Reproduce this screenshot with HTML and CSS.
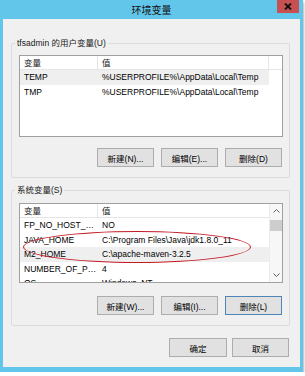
FILE: index.html
```html
<!DOCTYPE html>
<html>
  <head>
    <title>环境变量</title>
    <link rel="stylesheet" href="styles.css">
  </head>
  <body>
    <div class="window">
      <!-- Title bar -->
      <div class="titlebar">
        <span></span>
        <span class="title">环境变量</span>
        <span class="close">
          <svg width="8" height="7" viewBox="0 0 8 7">
            <path d="M1 0.5 L7 6.5 M7 0.5 L1 6.5" stroke="#111" stroke-width="1.8" fill="none" />
          </svg>
        </span>
      </div>

      <div class="client">
        <!-- User variables -->
        <fieldset class="group group-user">
          <legend>tfsadmin 的用户变量(U)</legend>
          <div class="list list-user">
            <div class="list-main">
              <div class="list-head">
                <span class="col-name">变量</span>
                <span class="col-value">值</span>
                <span class="col-fill"></span>
              </div>
              <div class="row selected">
                <span class="col-name">TEMP</span>
                <span class="col-value">%USERPROFILE%\AppData\Local\Temp</span>
              </div>
              <div class="row">
                <span class="col-name">TMP</span>
                <span class="col-value">%USERPROFILE%\AppData\Local\Temp</span>
              </div>
            </div>
          </div>
          <div class="buttons">
            <button class="btn">新建(N)...</button>
            <button class="btn">编辑(E)...</button>
            <button class="btn">删除(D)</button>
          </div>
        </fieldset>

        <!-- System variables -->
        <fieldset class="group group-system">
          <legend>系统变量(S)</legend>
          <div class="list list-system">
            <div class="list-main">
              <div class="list-head">
                <span class="col-name">变量</span>
                <span class="col-value">值</span>
              </div>
              <div class="row">
                <span class="col-name">FP_NO_HOST_CHECK</span>
                <span class="col-value">NO</span>
              </div>
              <div class="row">
                <span class="col-name">JAVA_HOME</span>
                <span class="col-value">C:\Program Files\Java\jdk1.8.0_11</span>
              </div>
              <div class="row selected">
                <span class="col-name">M2_HOME</span>
                <span class="col-value">C:\apache-maven-3.2.5</span>
              </div>
              <div class="row">
                <span class="col-name">NUMBER_OF_PROCESSORS</span>
                <span class="col-value">4</span>
              </div>
              <div class="row">
                <span class="col-name">OS</span>
                <span class="col-value">Windows_NT</span>
              </div>
            </div>
            <div class="scrollbar">
              <span class="arrow">
                <svg width="7" height="4" viewBox="0 0 7 4">
                  <polyline points="0.5,3.5 3.5,0.5 6.5,3.5" stroke="#606060" fill="none" />
                </svg>
              </span>
              <span class="thumb"></span>
              <span class="track"></span>
              <span class="arrow">
                <svg width="7" height="4" viewBox="0 0 7 4">
                  <polyline points="0.5,0.5 3.5,3.5 6.5,0.5" stroke="#606060" fill="none" />
                </svg>
              </span>
            </div>
            <!-- red mark around JAVA_HOME / M2_HOME -->
            <span class="mark"></span>
          </div>
          <div class="buttons buttons-system">
            <button class="btn">新建(W)...</button>
            <button class="btn">编辑(I)...</button>
            <button class="btn btn-focus">删除(L)</button>
          </div>
        </fieldset>

        <!-- Dialog buttons -->
        <div class="dialog-buttons">
          <button class="btn btn-ok">确定</button>
          <button class="btn">取消</button>
        </div>
      </div>
    </div>
  </body>
</html>
```

FILE: styles.css
```css
body {
  margin: 0;
  background: #ffffff;
  font-family: "Liberation Sans", "Noto Sans CJK SC", sans-serif;
  font-size: 8.5px;
  color: #000;
}
.window {
  width: 303px;
  height: 372px;
  box-sizing: border-box;
  padding: 0 3px 5px;
  background: #62c6eb;
  display: flex;
  flex-direction: column;
  box-shadow: 0 2px 3px rgba(0, 0, 0, 0.55);
}
.titlebar {
  height: 19px;
  display: grid;
  grid-template-columns: 1fr auto 1fr;
  align-items: start;
}
.title {
  font-family: "Noto Sans CJK SC", sans-serif;
  font-size: 10px;
  line-height: 20px;
  color: #111;
}
.close {
  justify-self: end;
  width: 22px;
  height: 13px;
  margin-right: 1px;
  background: #c75050;
  display: flex;
  align-items: center;
  justify-content: center;
}
.client {
  flex: 1;
  background: #f0f0f0;
  padding: 0 10px 10px 8px;
  display: flex;
  flex-direction: column;
}
.group {
  margin: 0;
  border: 1px solid #dcdcdc;
  border-radius: 2px;
  min-width: 0;
}
.group legend {
  margin-left: -4px;
  padding: 0 2px;
  line-height: 12px;
  font-size: 8.5px;
  color: #1a1a1a;
}
.group-user {
  margin-top: 18px;
  padding: 6px 6px 10px 7px;
}
.group-system {
  margin-top: 6px;
  padding: 7px 6px 10px 7px;
}
.list {
  position: relative;
  background: #fff;
  border: 1px solid #a0a0a0;
  display: flex;
  overflow: hidden;
}
.list-user {
  height: 80px;
}
.list-system {
  height: 78px;
}
.list-main {
  flex: 1;
  overflow: hidden;
}
.list-head {
  display: flex;
  height: 13px;
  line-height: 13px;
  border-bottom: 1px solid #e5e5e5;
  color: #1a1a1a;
}
.list-head span {
  font-family: "Noto Sans CJK SC", sans-serif;
}
.col-name {
  width: 78px;
  flex: none;
  box-sizing: border-box;
  padding-left: 4px;
  white-space: nowrap;
  overflow: hidden;
  text-overflow: ellipsis;
}
.col-value {
  width: 171px;
  flex: none;
  box-sizing: border-box;
  padding-left: 4px;
  white-space: nowrap;
  overflow: hidden;
}
.list-head .col-name,
.list-head .col-value {
  border-right: 1px solid #e5e5e5;
}
.list-system .list-head .col-value {
  border-right: none;
}
.col-fill {
  flex: 1;
}
.row {
  display: flex;
  width: 249px;
  height: 14.5px;
  line-height: 14.5px;
  color: #000;
}
.row .col-name {
  padding-right: 0;
}
.row.selected {
  background: #efefef;
}
.scrollbar {
  width: 12px;
  flex: none;
  background: #f7f7f7;
  border-left: 1px solid #ececec;
  display: flex;
  flex-direction: column;
}
.arrow {
  height: 14px;
  display: flex;
  align-items: center;
  justify-content: center;
}
.thumb {
  height: 11px;
  margin-top: 2px;
  background: #cdcdcd;
}
.track {
  flex: 1;
}
.mark {
  position: absolute;
  left: 3px;
  top: 27px;
  width: 228px;
  height: 32px;
  box-sizing: border-box;
  border: 1.5px solid #c21a24;
  border-radius: 50%;
}
.buttons {
  display: flex;
  justify-content: flex-end;
  gap: 7px;
  margin-top: 11px;
  margin-right: 1px;
}
.buttons-system {
  margin-top: 13px;
}
.btn {
  width: 57px;
  height: 19px;
  padding: 0;
  background: #e1e1e1;
  border: 1px solid #adadad;
  font-family: "Liberation Sans", "Noto Sans CJK SC", sans-serif;
  font-size: 8.5px;
  color: #000;
}
.btn-focus {
  border-color: #4f84b8;
}
.btn-ok {
  width: 58px;
}
.dialog-buttons {
  display: flex;
  justify-content: flex-end;
  gap: 5px;
  margin-top: 12px;
  margin-right: 1px;
}
```
